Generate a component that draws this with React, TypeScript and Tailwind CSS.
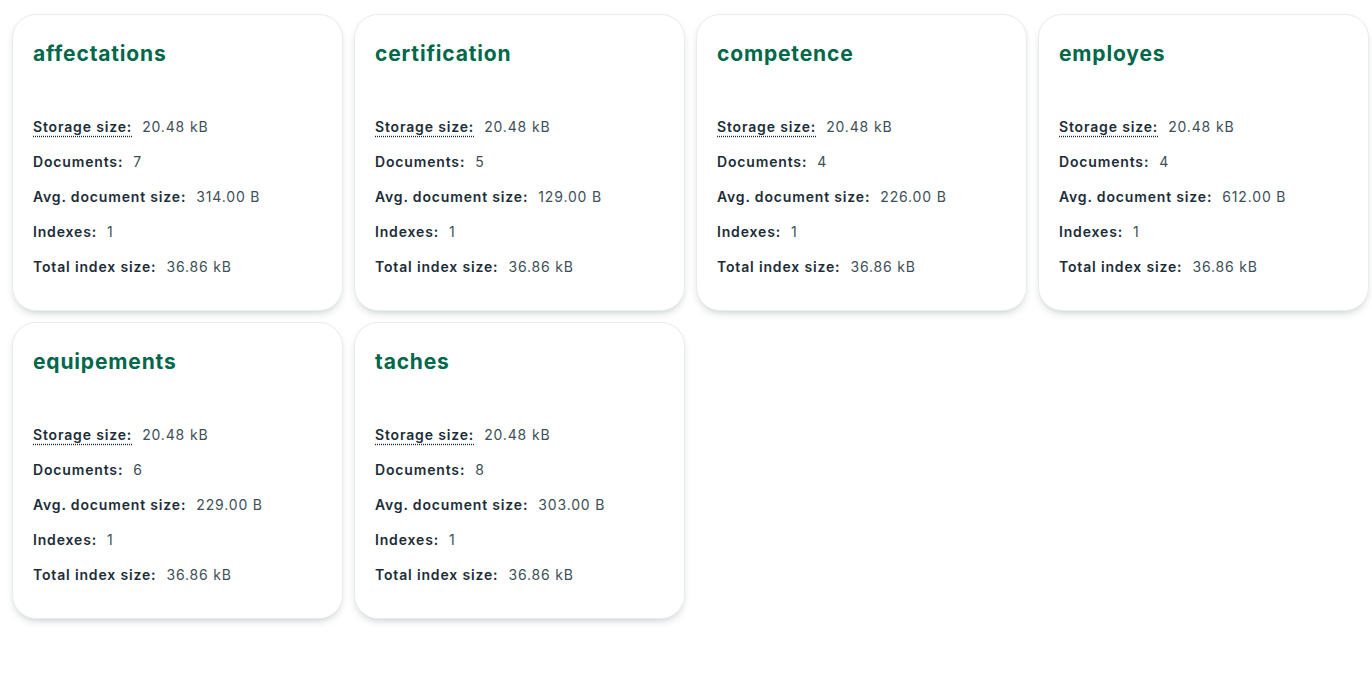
import React from "react";

interface Collection {
  name: string;
  documents: number;
  avgSize: string;
}

const collections: Collection[] = [
  { name: "affectations", documents: 7, avgSize: "314.00 B" },
  { name: "certification", documents: 5, avgSize: "129.00 B" },
  { name: "competence", documents: 4, avgSize: "226.00 B" },
  { name: "employes", documents: 4, avgSize: "612.00 B" },
  { name: "equipements", documents: 6, avgSize: "229.00 B" },
  { name: "taches", documents: 8, avgSize: "303.00 B" },
];

function Stat({ label, value, dotted }: { label: string; value: string | number; dotted?: boolean }) {
  return (
    <div className="flex items-baseline h-[35px] leading-[35px]">
      <span
        className={`font-semibold text-[#1c2d38] ${
          dotted ? "underline decoration-dotted decoration-[#1c2d38] underline-offset-[4px]" : ""
        }`}
      >
        {label}
      </span>
      <span className="ml-[10px] text-[#3d4f58]">{value}</span>
    </div>
  );
}

function CollectionCard({ c }: { c: Collection }) {
  return (
    <div className="h-[297px] rounded-[24px] border border-[#e8edeb] bg-white shadow-[0_4px_10px_-4px_rgba(0,30,43,0.3)] px-5 pt-[26px]">
      <h2 className="text-[21px] leading-[26px] font-bold tracking-[0.04em] text-[#00684a]">{c.name}</h2>
      <div className="mt-[42px] text-[14px] tracking-[0.06em]">
        <Stat label="Storage size:" value="20.48 kB" dotted />
        <Stat label="Documents:" value={c.documents} />
        <Stat label="Avg. document size:" value={c.avgSize} />
        <Stat label="Indexes:" value={1} />
        <Stat label="Total index size:" value="36.86 kB" />
      </div>
    </div>
  );
}

export default function App() {
  return (
    <div
      className="min-h-screen bg-white pl-[12px] pt-[14px]"
      style={{ fontFamily: "Inter, 'Noto Sans', sans-serif" }}
    >
      <div className="grid grid-cols-[repeat(4,331px)] gap-x-[11px] gap-y-[11px]">
        {collections.map((c) => (
          <CollectionCard key={c.name} c={c} />
        ))}
      </div>
    </div>
  );
}
